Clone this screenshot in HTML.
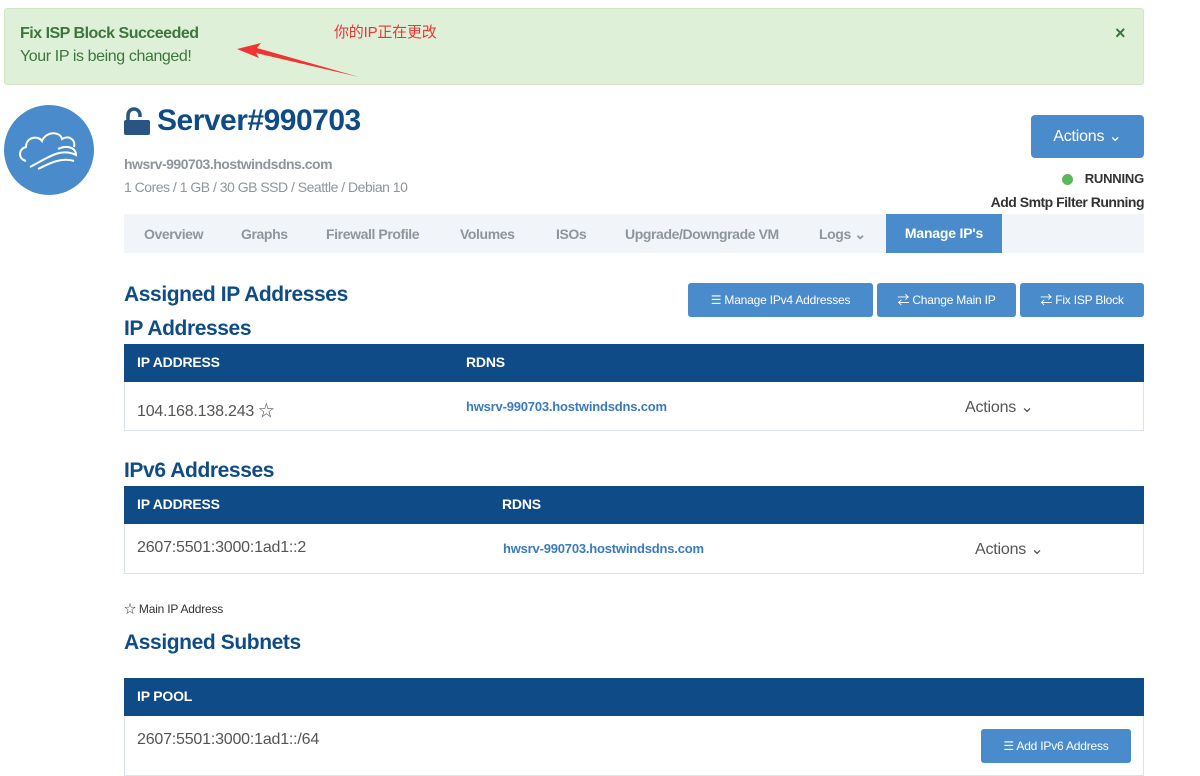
<!DOCTYPE html>
<html><head><meta charset="utf-8"><style>
*{box-sizing:border-box;margin:0;padding:0}
body{width:1200px;height:772px;overflow:hidden;background:#fff;font-family:"Liberation Sans","Noto Sans CJK SC",sans-serif;position:relative;color:#555;letter-spacing:-0.2px}
.abs{position:absolute}
.alert{left:4px;top:8px;width:1140px;height:77px;background:#dff0d8;border:1px solid #d0e6c4;border-radius:3px}
.h{color:#0f4c86;font-weight:bold}
.btn{background:#4a8ccb;color:#fff;border-radius:3px;font-size:12px;text-align:center}
.th{background:#0e4b87;color:#fff;font-weight:bold;font-size:14px}
.row{border:1px solid #dde3ea;border-top:none;background:#fff}
.link{color:#3b7bbd;font-weight:bold;font-size:13px}
.tabs{left:124px;top:214px;width:1020px;height:39px;background:#f1f4f8}
.tab{position:absolute;top:12px;font-size:14px;font-weight:bold;color:#8e959c;letter-spacing:-0.4px}
</style></head><body>
<div class="abs alert">
<div class="abs" style="left:15px;top:16px;font-weight:bold;font-size:16px;color:#3c763d;letter-spacing:-0.5px">Fix ISP Block Succeeded</div>
<div class="abs" style="left:15px;top:39px;font-size:16px;color:#3c763d;letter-spacing:-0.4px">Your IP is being changed!</div>
<div class="abs" style="left:329px;top:12px;font-size:15px;color:#f03434">你的IP正在更改</div>
<svg class="abs" style="left:228px;top:28px" width="130" height="45"><polygon points="4,12 28,6 24,11 126,40 23,16 26,21" fill="#f03434"/></svg>
<div class="abs" style="left:1110px;top:14px;font-size:18px;font-weight:bold;color:#3c763d">×</div>
</div>
<div class="abs" style="left:4px;top:105px;width:90px;height:90px;border-radius:50%;background:#4a8ccb"></div>
<svg class="abs" style="left:16px;top:125px" width="66" height="50" fill="none" stroke="#fff" stroke-width="2"><path d="M10,36 C2,34 2,24 10,22 C10,12 22,10 26,16 C30,6 44,6 46,14 C52,10 60,14 58,22"/><path d="M14,42 C30,34 44,22 60,30 C60,22 50,20 42,24"/><path d="M22,44 C34,38 46,32 58,36"/></svg>
<svg class="abs" style="left:124px;top:107px" width="26" height="28"><path d="M4,13 V8 a6,6 0 0 1 12,0 V10" stroke="#285584" stroke-width="3.5" fill="none"/><rect x="0" y="13" width="26" height="15" rx="2" fill="#285584"/></svg>
<div class="abs h" style="left:157px;top:104px;font-size:30px;letter-spacing:-0.5px">Server#990703</div>
<div class="abs" style="left:124px;top:156px;font-size:14px;font-weight:bold;color:#8e959c;letter-spacing:-0.5px">hwsrv-990703.hostwindsdns.com</div>
<div class="abs" style="left:124px;top:179px;font-size:14px;color:#8e959c;letter-spacing:-0.5px">1 Cores / 1 GB / 30 GB SSD / Seattle / Debian 10</div>
<div class="abs btn" style="left:1031px;top:115px;width:113px;height:43px;font-size:16px;line-height:43px;border-radius:4px">Actions ⌄</div>
<div class="abs" style="left:1062px;top:174px;width:11px;height:11px;border-radius:50%;background:#5cb85c"></div>
<div class="abs" style="right:56px;top:171px;font-size:13px;font-weight:bold;color:#333">RUNNING</div>
<div class="abs" style="right:56px;top:194px;font-size:14px;font-weight:bold;color:#333;letter-spacing:-0.5px">Add Smtp Filter Running</div>
<div class="abs tabs">
<span class="tab" style="left:20px">Overview</span><span class="tab" style="left:117px">Graphs</span><span class="tab" style="left:202px">Firewall Profile</span><span class="tab" style="left:336px">Volumes</span><span class="tab" style="left:432px">ISOs</span><span class="tab" style="left:501px">Upgrade/Downgrade VM</span><span class="tab" style="left:695px">Logs ⌄</span>
<div class="abs" style="left:762px;top:0;width:116px;height:39px;background:#4a8ccb;color:#fff;font-weight:bold;font-size:14px;text-align:center;line-height:39px">Manage IP's</div>
</div>
<div class="abs h" style="left:124px;top:283px;font-size:21px;letter-spacing:-0.4px">Assigned IP Addresses</div>
<div class="abs h" style="left:124px;top:317px;font-size:21px;letter-spacing:-0.4px">IP Addresses</div>
<div class="abs btn" style="left:688px;top:283px;width:185px;height:34px;line-height:34px">☰ Manage IPv4 Addresses</div>
<div class="abs btn" style="left:877px;top:283px;width:139px;height:34px;line-height:34px">⇄ Change Main IP</div>
<div class="abs btn" style="left:1020px;top:283px;width:124px;height:34px;line-height:34px">⇄ Fix ISP Block</div>
<div class="abs th" style="left:124px;top:344px;width:1020px;height:38px"><span class="abs" style="left:13px;top:10px">IP ADDRESS</span><span class="abs" style="left:342px;top:10px">RDNS</span></div>
<div class="abs row" style="left:124px;top:382px;width:1020px;height:49px"><span class="abs" style="left:12px;top:15px;font-size:16px">104.168.138.243 ☆</span><span class="abs link" style="left:341px;top:17px">hwsrv-990703.hostwindsdns.com</span><span class="abs" style="left:840px;top:15px;font-size:16px">Actions ⌄</span></div>
<div class="abs h" style="left:124px;top:459px;font-size:21px;letter-spacing:-0.4px">IPv6 Addresses</div>
<div class="abs th" style="left:124px;top:486px;width:1020px;height:38px"><span class="abs" style="left:13px;top:10px">IP ADDRESS</span><span class="abs" style="left:378px;top:10px">RDNS</span></div>
<div class="abs row" style="left:124px;top:524px;width:1020px;height:50px"><span class="abs" style="left:12px;top:15px;font-size:16px">2607:5501:3000:1ad1::2</span><span class="abs link" style="left:378px;top:17px">hwsrv-990703.hostwindsdns.com</span><span class="abs" style="left:850px;top:15px;font-size:16px">Actions ⌄</span></div>
<div class="abs" style="left:124px;top:600px;font-size:12px;color:#333">☆ Main IP Address</div>
<div class="abs h" style="left:124px;top:631px;font-size:21px;letter-spacing:-0.4px">Assigned Subnets</div>
<div class="abs th" style="left:124px;top:678px;width:1020px;height:38px"><span class="abs" style="left:13px;top:10px">IP POOL</span></div>
<div class="abs row" style="left:124px;top:716px;width:1020px;height:60px"><span class="abs" style="left:12px;top:15px;font-size:16px">2607:5501:3000:1ad1::/64</span></div>
<div class="abs btn" style="left:981px;top:729px;width:150px;height:34px;line-height:34px">☰ Add IPv6 Address</div>
</body></html>
